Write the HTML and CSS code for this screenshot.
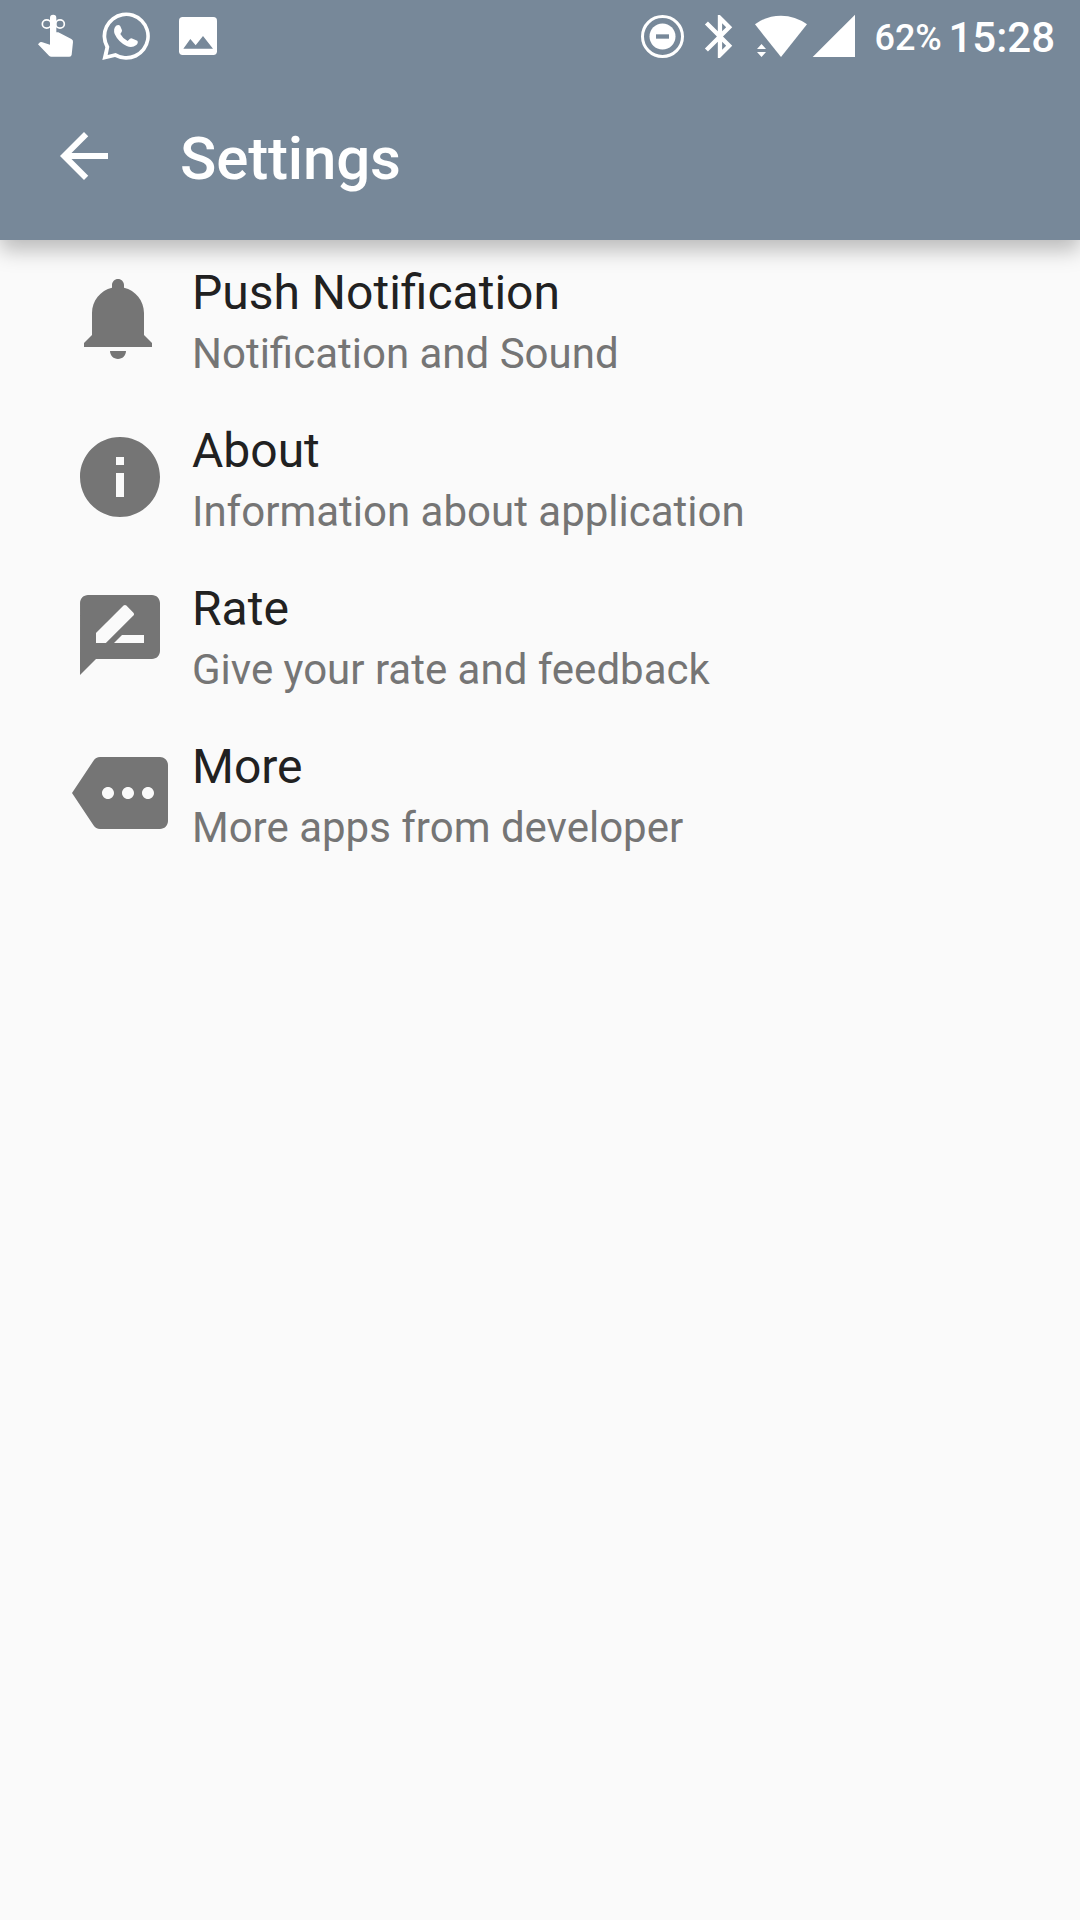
FILE: index.html
```html
<!DOCTYPE html>
<html lang="en">
<head>
    <meta charset="UTF-8">
    <meta name="viewport" content="width=device-width, initial-scale=1.0">
    <title>Settings</title>
    <link rel="stylesheet" href="styles.css">
</head>
<body>
    <header class="header">
        <div class="status-bar">
            <div class="status-left">
                <svg width="39" height="72" viewBox="48 0 117 216">
                    <path d="M90 54a9.5 9.5 0 0 1 19 0V97H115L154 117Q160 120 159 126L155 164Q154 170 148 170H94Q90 170 87 167L54 133L60 127Q63 125 67 127L90 134Z"/>
                    <g class="ring">
                        <ellipse cx="80" cy="72" rx="13" ry="12.5"/>
                        <ellipse cx="120" cy="72" rx="13" ry="12.5"/>
                    </g>
                </svg>
                <svg width="52" height="72" viewBox="240 0 156 216">
                    <path fill-rule="evenodd" d="M247 180L256 142A71 71 0 1 1 285 171ZM263 165L287 159A60 60 0 1 0 268 140Z"/>
                    <path d="M288 77Q297 72 301 79L306 91Q307 95 301 102Q308 115 323 123L330 116Q334 114 338 116L352 122Q356 128 349 135Q336 145 320 138Q295 126 284 102Q279 86 288 77Z"/>
                </svg>
                <svg width="42" height="72" viewBox="471 0 126 216">
                    <rect x="477" y="51" width="114" height="114" rx="11"/>
                    <path class="cut" d="M490 146L511 117L527 136L549 108L579 146Z"/>
                </svg>
            </div>
            <div class="status-right">
                <svg class="dnd" width="45" height="72" viewBox="60 0 135 216">
                    <circle class="ring-thick" cx="127.500" cy="109.500" r="60"/>
                    <circle cx="127.500" cy="109.500" r="39"/>
                    <rect class="cut" x="108" y="103" width="39" height="13"/>
                </svg>
                <svg class="bluetooth" width="29" height="72" viewBox="255 0 87 216">
                    <path transform="translate(225.500 32) scale(6.450)" d="M17.710 7.710L12 2h-1v7.590L6.410 5 5 6.410 10.590 12 5 17.590 6.410 19 11 14.410V22h1l5.710-5.710-4.300-4.290 4.300-4.290zM13 5.830l1.880 1.880L13 9.590V5.830zm1.880 10.460L13 18.170v-3.760l1.880 1.880z"/>
                </svg>
                <svg class="wifi" width="54" height="72" viewBox="402 0 162 216">
                    <path d="M405 73Q440 47 483 47T561 73L483 171Z"/>
                    <path d="M411 147L424.500 132L438 147ZM411 156H438L424.500 171Z"/>
                </svg>
                <svg class="signal" width="44" height="72" viewBox="576 0 132 216">
                    <path d="M578 171L705 44V171Z"/>
                </svg>
                <span class="battery">62%</span>
                <span class="clock">15:28</span>
            </div>
        </div>
        <div class="toolbar">
            <svg class="back" width="72" height="72" viewBox="0 0 24 24">
                <path d="M20 11H7.830l5.590-5.590L12 4l-8 8 8 8 1.410-1.410L7.830 13H20v-2z"/>
            </svg>
            <h1>Settings</h1>
        </div>
    </header>

    <main class="list">
        <div class="item">
            <svg class="item-icon" viewBox="0 0 24 24">
                <path d="M11.500 22c1.100 0 2-.9 2-2h-4c0 1.100.9 2 2 2zm6.500-6v-5.500c0-3.070-2.130-5.640-5-6.320V3.500c0-.83-.67-1.500-1.500-1.500S10 2.670 10 3.500v.68c-2.870.68-5 3.250-5 6.320V16l-2 2v1h17v-1l-2-2z"/>
            </svg>
            <div class="item-text">
                <h2>Push Notification</h2>
                <p>Notification and Sound</p>
            </div>
        </div>
        <div class="item">
            <svg class="item-icon" viewBox="0 0 24 24">
                <path d="M12 2C6.480 2 2 6.480 2 12s4.480 10 10 10 10-4.480 10-10S17.520 2 12 2zm1 15h-2v-6h2v6zm0-8h-2V7h2v2z"/>
            </svg>
            <div class="item-text">
                <h2>About</h2>
                <p>Information about application</p>
            </div>
        </div>
        <div class="item">
            <svg class="item-icon" viewBox="0 0 24 24">
                <path d="M20 2H4c-1.100 0-1.990.9-1.990 2L2 22l4-4h14c1.100 0 2-.9 2-2V4c0-1.100-.9-2-2-2zM6 14v-2.470l6.880-6.880c.2-.2.510-.2.710 0l1.770 1.770c.2.2.2.510 0 .710L8.470 14H6zm12 0h-7.500l2-2H18v2z"/>
            </svg>
            <div class="item-text">
                <h2>Rate</h2>
                <p>Give your rate and feedback</p>
            </div>
        </div>
        <div class="item">
            <svg class="item-icon" viewBox="0 0 24 24">
                <path d="M22 3H7c-.69 0-1.230.35-1.590.88L0 12l5.410 8.110c.36.53.9.89 1.590.89h15c1.100 0 2-.9 2-2V5c0-1.100-.9-2-2-2zM9 13.500c-.83 0-1.500-.67-1.500-1.500s.67-1.500 1.500-1.500 1.500.67 1.500 1.500-.67 1.500-1.500 1.500zm5 0c-.83 0-1.500-.67-1.500-1.500s.67-1.500 1.500-1.500 1.500.67 1.500 1.500-.67 1.500-1.500 1.500zm5 0c-.83 0-1.500-.67-1.500-1.500s.67-1.500 1.500-1.500 1.500.67 1.500 1.500-.67 1.500-1.500 1.500z"/>
            </svg>
            <div class="item-text">
                <h2>More</h2>
                <p>More apps from developer</p>
            </div>
        </div>
    </main>
</body>
</html>
```
FILE: styles.css
```css
:root {
    --primary: #778899;
    --background: #fafafa;
    --text: #212121;
    --text-secondary: #757575;
}

* {
    box-sizing: border-box;
}

body {
    margin: 0;
    min-height: 100vh;
    font-family: Roboto, sans-serif;
    background-color: var(--background);
    color: var(--text);
}

h1, h2, p {
    margin: 0;
}

svg {
    display: block;
    flex-shrink: 0;
}

.header {
    height: 240px;
    background-color: var(--primary);
    color: #fff;
    box-shadow: 0 10px 20px rgba(0, 0, 0, 0.26);
}

.header svg {
    fill: #fff;
}

.status-bar {
    display: flex;
    justify-content: space-between;
    height: 72px;
    padding: 0 25px 0 36px;
}

.status-left {
    display: flex;
    gap: 25px;
}

.status-right {
    display: flex;
    font-weight: 500;
    line-height: 75px;
}

.status-bar .ring {
    fill: none;
    stroke: #fff;
    stroke-width: 5;
}

.status-bar .ring-thick {
    fill: none;
    stroke: #fff;
    stroke-width: 9;
}

.status-bar .cut {
    fill: var(--primary);
}

.dnd {
    margin-right: 19px;
}

.bluetooth {
    margin-right: 21px;
}

.wifi {
    margin-right: 4px;
}

.battery {
    width: 74px;
    margin-left: 18px;
    font-size: 36px;
    line-height: 76px;
}

.clock {
    font-size: 42px;
}

.toolbar {
    display: flex;
    align-items: center;
    height: 168px;
    padding-left: 48px;
}

.back {
    margin-right: 60px;
}

.toolbar h1 {
    padding-top: 6px;
    font-size: 60px;
    font-weight: 500;
    line-height: 72px;
    letter-spacing: -0.15px;
}

.list {
    padding-top: 21px;
}

.item {
    display: flex;
    height: 158px;
    padding-left: 72px;
}

.item-icon {
    width: 96px;
    height: 96px;
    margin: 10px 24px 0 0;
    fill: var(--text-secondary);
}

.item h2 {
    font-size: 48px;
    font-weight: 400;
    line-height: 64px;
}

.item p {
    font-size: 42px;
    line-height: 58px;
    color: var(--text-secondary);
}
```
